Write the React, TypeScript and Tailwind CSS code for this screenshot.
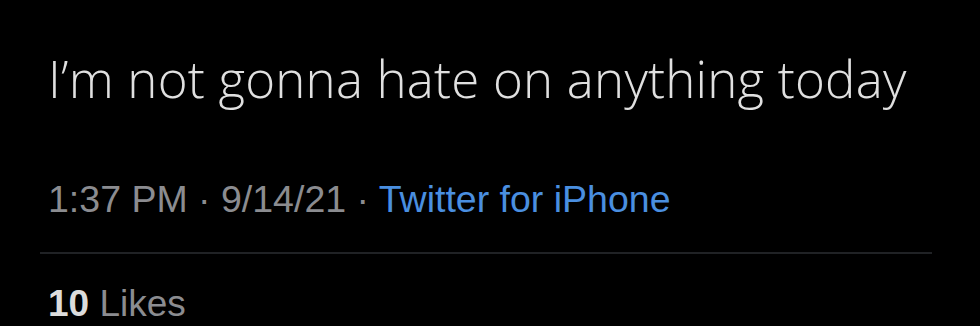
export default function App() {
  return (
    <div className="w-[980px] h-[326px] bg-black overflow-hidden pl-[48px] pr-[48px]">
      <div
        className="pt-[43px] text-[51px] leading-[70px] font-light tracking-[0.2px] text-[#e0e0e0] whitespace-nowrap"
        style={{ fontFamily: '"Open Sans", sans-serif' }}
      >
        I’m not gonna hate on anything today
      </div>
      <div
        className="mt-[64px] text-[37.5px] leading-[44px] text-[#8b8c90] whitespace-nowrap"
        style={{ fontFamily: '"Liberation Sans", Arial, sans-serif' }}
      >
        1:37 PM · 9/14/21 · <span className="text-[#4a8fe0]">Twitter for iPhone</span>
      </div>
      <div className="mt-[31px] w-[892px] -ml-[8px] h-[2px] bg-[#202225]" />
      <div
        className="mt-[30px] text-[37px] leading-[40px] text-[#8b8c90] whitespace-nowrap"
        style={{ fontFamily: '"Liberation Sans", Arial, sans-serif' }}
      >
        <span className="font-bold text-[#dcdcdc]">10</span> Likes
      </div>
    </div>
  );
}
